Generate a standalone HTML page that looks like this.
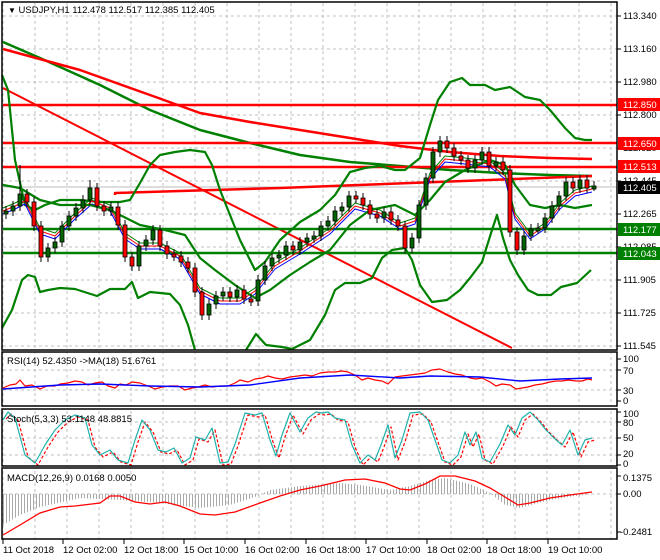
<!DOCTYPE html>
<html><head><meta charset="utf-8">
<style>
html,body{margin:0;padding:0;background:#fff;}
svg{display:block;font-family:"Liberation Sans",sans-serif;font-size:9.5px;}
</style></head><body>
<svg width="660" height="560" viewBox="0 0 660 560" xmlns="http://www.w3.org/2000/svg">
<defs>
<pattern id="hist" width="3" height="10" patternUnits="userSpaceOnUse"><rect x="0" y="0" width="1" height="10" fill="#a9a9a9"/></pattern>
</defs>
<rect width="660" height="560" fill="#fff"/>
<g stroke="#c0c0c0" stroke-dasharray="3,3" stroke-width="1" fill="none">
<path d="M3 3V539M35 3V539M67 3V539M99 3V539M131 3V539M163 3V539M195 3V539M227 3V539M259 3V539M291 3V539M323 3V539M355 3V539M387 3V539M419 3V539M451 3V539M483 3V539M515 3V539M547 3V539M579 3V539M611 3V539"/>
<path d="M3 16H617M3 49H617M3 82H617M3 115H617M3 148H617M3 181H617M3 214H617M3 247H617M3 280H617M3 313H617M3 346H617M3 370H617M3 390H617M3 422H617M3 438H617M3 455H617M3 494H617"/>
</g>
<rect x="3" y="351" width="614" height="1" fill="#fff"/>
<rect x="3" y="406" width="614" height="3" fill="#fff"/>
<rect x="3" y="466" width="614" height="2" fill="#fff"/>
<line x1="3" y1="187" x2="617" y2="187" stroke="#bbb"/>
<g fill="none" stroke-linejoin="round">
<path d="M3 42L40 58L100 85L150 110L200 130L250 143L300 155L350 162L400 166L450 170L500 173L550 175L592 176" stroke="#008000" stroke-width="2.5"/>
<path d="M3 49L80 70L150 95L200 113L250 122L300 130L350 138L400 146L450 152L500 156L550 158L592 159" stroke="#f00" stroke-width="2.5"/>
<path d="M3 88L512 348" stroke="#f00" stroke-width="2"/>
<path d="M3 105H617M3 143H617M3 167H617" stroke="#f00" stroke-width="2.5"/>
<path d="M3 229H617M3 253H617" stroke="#008000" stroke-width="2.5"/>
<path d="M115 195V193L280 188L592 176" stroke="#f00" stroke-width="2.5"/>
<path d="M2 75L8 90L15 160L25 205L35 210L45 205L60 200L80 200L100 202L120 202L130 200L140 183L150 165L160 155L175 152L190 150L205 152L212 165L220 190L240 240L255 270L265 262L280 240L300 222L320 210L335 195L350 172L365 168L380 166L395 170L405 170L420 158L430 125L438 100L450 82L462 78L470 85L485 85L495 90L510 87L525 97L540 100L550 110L565 128L575 138L585 140L592 140" stroke="#008000" stroke-width="2.2"/>
<path d="M2 328L12 310L22 280L28 275L35 277L40 292L48 290L60 288L75 289L97 296L110 289L125 289L132 282L138 298L150 292L170 294L180 305L188 325L195 350" stroke="#008000" stroke-width="2.2"/>
<path d="M246 350L256 334L266 345L282 347L292 349L310 340L325 315L335 290L345 283L360 283L372 278L382 258L392 250L405 248L412 260L420 285L432 302L447 300L460 290L470 278L482 262L492 230L497 215L503 238L510 260L518 275L528 290L538 295L551 295L561 287L577 283L591 270" stroke="#008000" stroke-width="2.2"/>
<path d="M3 214L15 209L25 204L40 234L55 239L75 219L92 204L110 211L125 239L140 249L160 249L180 259L200 294L220 304L240 304L255 294L275 269L300 254L330 234L355 209L380 216L400 229L415 224L430 179L445 162L465 164L490 167L505 179L515 219L530 239L545 229L560 209L575 196L592 192" stroke="#00f" stroke-width="1"/>
<path d="M3 211L15 206L25 201L40 231L55 236L75 216L92 201L110 208L125 236L140 246L160 246L180 256L200 291L220 301L240 301L255 291L275 266L300 251L330 231L355 206L380 213L400 226L415 221L430 176L445 159L465 161L490 164L505 176L515 216L530 236L545 226L560 206L575 193L592 189" stroke="#f00" stroke-width="1"/>
<path d="M3 208L15 203L25 198L40 228L55 233L75 213L92 198L110 205L125 233L140 243L160 243L180 253L200 288L220 298L240 298L255 288L275 263L300 248L330 228L355 203L380 210L400 223L415 218L430 173L445 156L465 158L490 161L505 173L515 213L530 233L545 223L560 203L575 190L592 186" stroke="#008000" stroke-width="1"/>
<path d="M3 185L20 188L40 200L60 205L90 205L110 210L140 225L165 230L185 235L200 258L215 270L235 285L255 298L270 290L290 275L310 262L330 250L350 225L370 210L395 205L415 215L430 200L445 182L465 170L490 160L505 165L515 185L530 205L545 208L560 205L575 208L592 205" stroke="#008000" stroke-width="2.2"/>
</g>
<path stroke="#000" stroke-width="1" fill="none" d="M6 206V219M13 201V216M20 165V211M27 189V207M34 197V231M41 221V262M48 243V262M55 237V253M62 221V247M69 211V231M76 203V221M83 195V213M90 180V205M97 183V211M104 201V216M111 202V216M118 202V230M125 220V262M132 252V271M139 241V271M146 235V251M153 225V245M160 225V251M167 241V259M174 249V261M181 251V267M188 257V273M195 263V297M202 287V320M209 299V320M216 291V309M223 287V301M230 287V302M237 285V302M244 285V304M251 294V306M258 275V306M265 261V285M272 253V271M279 250V263M286 241V260M293 241V255M300 237V255M307 233V247M314 231V243M321 221V241M328 216V231M335 206V226M342 202V216M349 191V212M356 191V203M363 193V210M370 200V219M377 209V223M384 207V223M391 207V225M398 215V231M405 221V253M412 233V253M419 200V243M426 173V210M433 147V183M440 136V157M447 136V153M454 143V161M461 151V165M468 155V173M475 155V173M482 147V165M489 147V171M496 157V171M503 157V175M510 165V237M517 227V255M524 231V255M531 224V241M538 223V234M545 213V233M552 201V223M559 191V211M566 177V201M573 177V193M580 175V193M587 175V193M594 181V191"/>
<g stroke="#000" stroke-width="0.8">
<g fill="#006400">
<rect x="4" y="211" width="4" height="3"/><rect x="11" y="206" width="4" height="5"/><rect x="18" y="194" width="4" height="12"/><rect x="46" y="248" width="4" height="9"/><rect x="53" y="242" width="4" height="6"/><rect x="60" y="226" width="4" height="16"/><rect x="67" y="216" width="4" height="10"/><rect x="74" y="208" width="4" height="8"/><rect x="81" y="200" width="4" height="8"/><rect x="88" y="188" width="4" height="12"/><rect x="109" y="207" width="4" height="4"/><rect x="137" y="246" width="4" height="20"/><rect x="144" y="240" width="4" height="6"/><rect x="151" y="230" width="4" height="10"/><rect x="207" y="304" width="4" height="11"/><rect x="214" y="296" width="4" height="8"/><rect x="221" y="292" width="4" height="4"/><rect x="235" y="290" width="4" height="7"/><rect x="256" y="280" width="4" height="21"/><rect x="263" y="266" width="4" height="14"/><rect x="270" y="258" width="4" height="8"/><rect x="277" y="255" width="4" height="3"/><rect x="284" y="246" width="4" height="9"/><rect x="298" y="242" width="4" height="8"/><rect x="305" y="238" width="4" height="4"/><rect x="312" y="236" width="4" height="3"/><rect x="319" y="226" width="4" height="10"/><rect x="326" y="221" width="4" height="5"/><rect x="333" y="211" width="4" height="10"/><rect x="340" y="207" width="4" height="4"/><rect x="347" y="196" width="4" height="11"/><rect x="382" y="212" width="4" height="6"/><rect x="410" y="238" width="4" height="10"/><rect x="417" y="205" width="4" height="33"/><rect x="424" y="178" width="4" height="27"/><rect x="431" y="152" width="4" height="26"/><rect x="438" y="141" width="4" height="11"/><rect x="473" y="160" width="4" height="8"/><rect x="480" y="152" width="4" height="8"/><rect x="494" y="162" width="4" height="4"/><rect x="522" y="236" width="4" height="14"/><rect x="529" y="229" width="4" height="7"/><rect x="536" y="228" width="4" height="3"/><rect x="543" y="218" width="4" height="10"/><rect x="550" y="206" width="4" height="12"/><rect x="557" y="196" width="4" height="10"/><rect x="564" y="182" width="4" height="14"/><rect x="578" y="180" width="4" height="8"/><rect x="592" y="186" width="4" height="3"/>
</g>
<g fill="#f00">
<rect x="25" y="194" width="4" height="8"/><rect x="32" y="202" width="4" height="24"/><rect x="39" y="226" width="4" height="31"/><rect x="95" y="188" width="4" height="18"/><rect x="102" y="206" width="4" height="5"/><rect x="116" y="207" width="4" height="18"/><rect x="123" y="225" width="4" height="32"/><rect x="130" y="257" width="4" height="9"/><rect x="158" y="230" width="4" height="16"/><rect x="165" y="246" width="4" height="8"/><rect x="172" y="254" width="4" height="3"/><rect x="179" y="256" width="4" height="6"/><rect x="186" y="262" width="4" height="6"/><rect x="193" y="268" width="4" height="24"/><rect x="200" y="292" width="4" height="23"/><rect x="228" y="292" width="4" height="5"/><rect x="242" y="290" width="4" height="9"/><rect x="249" y="299" width="4" height="3"/><rect x="291" y="246" width="4" height="4"/><rect x="354" y="196" width="4" height="3"/><rect x="361" y="198" width="4" height="7"/><rect x="368" y="205" width="4" height="9"/><rect x="375" y="214" width="4" height="4"/><rect x="389" y="212" width="4" height="8"/><rect x="396" y="220" width="4" height="6"/><rect x="403" y="226" width="4" height="22"/><rect x="445" y="141" width="4" height="7"/><rect x="452" y="148" width="4" height="8"/><rect x="459" y="156" width="4" height="4"/><rect x="466" y="160" width="4" height="8"/><rect x="487" y="152" width="4" height="14"/><rect x="501" y="162" width="4" height="8"/><rect x="508" y="170" width="4" height="62"/><rect x="515" y="232" width="4" height="18"/><rect x="571" y="182" width="4" height="6"/><rect x="585" y="180" width="4" height="8"/>
</g>
</g>
<g fill="none" stroke-linejoin="round">
<path d="M3 388L10 385L16 384L20 380L25 386L32 385L40 389L47 386L55 386L60 384L68 383L75 381L82 382L88 385L95 383L102 382L108 386L115 388L120 384L126 385L132 382L140 383L148 386L155 389L162 387L170 386L178 386L185 390L192 388L198 387L205 385L212 387L220 386L228 386L235 383L240 380L248 382L255 379L262 378L268 376L275 378L282 379L290 377L298 376L305 375L312 376L320 373L328 372L335 372L342 371L348 372L355 375L362 380L368 378L375 380L382 381L388 384L395 377L402 376L410 375L418 374L425 373L432 370L440 369L448 372L455 374L462 375L470 378L476 379L482 378L490 382L496 386L502 384L510 385L516 389L522 388L528 387L535 385L542 384L550 382L556 381L562 381L568 380L576 381L582 381L588 379L592 380" stroke="#f00" stroke-width="1.2"/>
<path d="M3 389L60 385L100 384L150 386L200 387L250 385L300 378L350 375L400 378L430 376L480 377L520 381L560 379L592 378" stroke="#00f" stroke-width="1.4"/>
<path d="M6 419L11 414L18 420L28 457L38 465L48 447L58 432L68 422L78 417L88 420L95 447L103 457L113 452L121 462L131 465L138 442L145 422L153 432L161 452L169 454L177 450L185 465L193 460L199 439L208 442L215 430L223 465L231 464L238 446L248 415L258 417L265 415L273 442L279 458L285 437L293 415L303 434L311 420L319 414L325 415L331 414L338 420L348 422L355 447L363 465L371 457L378 462L384 447L391 427L398 460L405 442L413 415L423 414L431 422L438 442L445 462L453 465L461 457L468 434L473 447L479 434L485 460L493 464L503 446L511 427L518 437L525 420L533 414L541 422L549 432L557 440L565 447L573 432L581 457L588 442L595 440" stroke="#f00" stroke-width="1.2" stroke-dasharray="3,2"/>
<path d="M3 420L8 412L15 418L25 455L35 463L45 445L55 430L65 420L75 415L85 418L92 445L100 455L110 450L118 460L128 463L135 440L142 420L150 430L158 450L166 452L174 448L182 463L190 458L196 437L205 440L212 428L220 463L228 462L235 444L245 413L255 415L262 413L270 440L276 456L282 435L290 413L300 432L308 418L316 412L322 413L328 412L335 418L345 420L352 445L360 463L368 455L375 460L381 445L388 425L395 458L402 440L410 413L420 412L428 420L435 440L442 460L450 463L458 455L465 432L470 445L476 432L482 458L490 462L500 444L508 425L515 435L522 418L530 412L538 420L546 430L554 438L562 445L570 430L578 455L585 440L592 438" stroke="#20b2aa" stroke-width="1.2"/>
</g>
<path d="M3 494V525L20 515L40 507L80 498L120 500L160 503L200 508L230 505L255 497L270 490L300 486L340 483L360 485L390 490L410 486L430 480L445 478L470 484L490 493L505 505L520 508L550 500L575 496L592 494Z" fill="url(#hist)"/>
<path d="M3 535L20 525L40 513L60 507L75 506L100 503L110 496L120 496L135 502L150 504L165 502L180 506L200 514L215 515L235 512L260 503L280 496L300 490L320 486L345 480L365 479L385 483L400 489L410 490L425 484L440 476L455 476L475 481L490 488L505 497L518 505L530 503L550 498L570 495L592 492" fill="none" stroke="#f00" stroke-width="1.3"/>
<g fill="none" stroke="#000" stroke-width="1.5">
<rect x="2" y="2" width="615" height="348"/>
<rect x="2" y="352" width="615" height="54"/>
<rect x="2" y="409" width="615" height="57"/>
<rect x="2" y="468" width="615" height="71"/>
</g>
<path stroke="#000" d="M617 16H621M617 49H621M617 82H621M617 115H621M617 148H621M617 181H621M617 214H621M617 247H621M617 280H621M617 313H621M617 346H621M617 359H621M617 370H621M617 390H621M617 401H621M617 412H621M617 422H621M617 438H621M617 455H621M617 465H621M617 476H621M617 494H621M617 532H621M3 539V544M63 539V544M124 539V544M184 539V544M245 539V544M306 539V544M366 539V544M427 539V544M487 539V544M548 539V544"/>
<g fill="#000">
<text x="8" y="13"><tspan font-size="8">▼</tspan> USDJPY,H1  112.478 112.517 112.385 112.405</text>
<text x="623" y="19">113.340</text>
<text x="623" y="52">113.160</text>
<text x="623" y="85">112.980</text>
<text x="623" y="118">112.800</text>
<text x="623" y="151">112.620</text>
<text x="623" y="184">112.445</text>
<text x="623" y="217">112.265</text>
<text x="623" y="250">112.085</text>
<text x="623" y="283">111.905</text>
<text x="623" y="316">111.725</text>
<text x="623" y="349">111.545</text>
<rect x="618" y="98" width="42" height="13" fill="#f00"/><text x="623" y="108" fill="#fff">112.850</text>
<rect x="618" y="137" width="42" height="13" fill="#f00"/><text x="623" y="147" fill="#fff">112.650</text>
<rect x="618" y="160" width="42" height="13" fill="#f00"/><text x="623" y="170" fill="#fff">112.513</text>
<rect x="618" y="181" width="42" height="13" fill="#000"/><text x="623" y="191" fill="#fff">112.405</text>
<rect x="618" y="223" width="42" height="13" fill="#008000"/><text x="623" y="233" fill="#fff">112.177</text>
<rect x="618" y="247" width="42" height="13" fill="#008000"/><text x="623" y="257" fill="#fff">112.043</text>
<text x="7" y="364">RSI(14) 52.4350  -&gt;MA(18) 51.6761</text>
<text x="623" y="362">100</text><text x="623" y="374">70</text><text x="623" y="394">30</text><text x="623" y="404">0</text>
<text x="7" y="422">Stoch(5,3,3) 53.1148 48.8815</text>
<text x="623" y="417">100</text><text x="623" y="426">80</text><text x="623" y="441">50</text><text x="623" y="457">20</text><text x="623" y="467">0</text>
<text x="7" y="481">MACD(12,26,9) 0.0168 0.0050</text>
<text x="623" y="481">0.1375</text><text x="623" y="497">0.00</text><text x="620" y="535">-0.2481</text>
<text x="3" y="553">11 Oct 2018</text>
<text x="63" y="553">12 Oct 02:00</text>
<text x="124" y="553">12 Oct 18:00</text>
<text x="184" y="553">15 Oct 10:00</text>
<text x="245" y="553">16 Oct 02:00</text>
<text x="306" y="553">16 Oct 18:00</text>
<text x="366" y="553">17 Oct 10:00</text>
<text x="427" y="553">18 Oct 02:00</text>
<text x="487" y="553">18 Oct 18:00</text>
<text x="548" y="553">19 Oct 10:00</text>
</g>
</svg>
</body></html>
